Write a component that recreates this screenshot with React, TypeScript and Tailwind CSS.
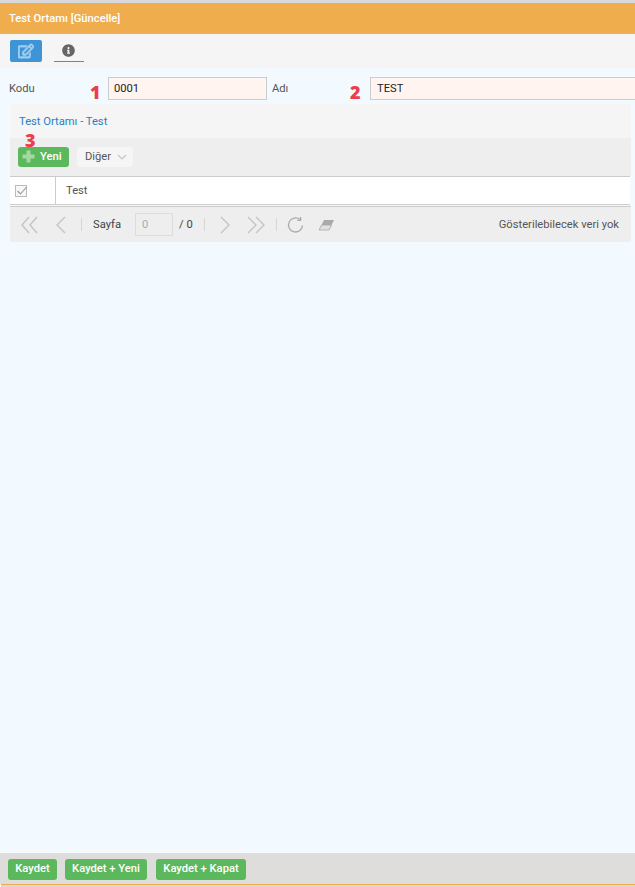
import { FaRegEdit, FaInfoCircle } from "react-icons/fa";

const font = { fontFamily: "Roboto, sans-serif" };

function Chev({ d, w = 18 }: { d: string; w?: number }) {
  return (
    <svg className="shrink-0" width={w} height="18" viewBox={`0 0 ${w} 18`} fill="none" stroke="#c4c4c4" strokeWidth="1.4">
      <path d={d} />
    </svg>
  );
}

function Sep() {
  return <span className="w-px h-[13px] bg-[#d5d5d5] shrink-0" />;
}

function GreenBtn({ children, w }: { children: string; w: string }) {
  return (
    <button className={`h-[21px] ${w} rounded-[3px] bg-[#5cb85c] text-white text-[11.2px] font-medium leading-none`}>
      {children}
    </button>
  );
}

function Mark({ children, className }: { children: string; className: string }) {
  return (
    <span
      className={`absolute text-[#ef3b4e] text-[18px] font-extrabold leading-none ${className}`}
      style={{ fontFamily: '"Open Sans", sans-serif' }}
    >
      {children}
    </span>
  );
}

export default function App() {
  return (
    <div className="w-[635px] h-[887px] flex flex-col overflow-hidden text-[11.2px] text-[#555]" style={font}>
      <div className="h-[3px] bg-[#d9d9d9]" />
      <div className="h-[31px] bg-[#f0ad4e] flex items-center pl-[9px] pt-[2px] text-white font-medium">
        Test Ortamı [Güncelle]
      </div>
      <div className="h-[34px] bg-[#f5f5f5] flex items-start pl-[10px] pt-[6px]">
        <div className="w-[32px] h-[22px] rounded-[2px] bg-[#3f94d6] flex items-center justify-center text-[#9fcff2]">
          <FaRegEdit size={16} stroke="currentColor" strokeWidth={30} />
        </div>
        <div className="ml-[12px] w-[30px] h-[22px] pr-[2px] border-b border-[#3f94d6] flex items-center justify-center text-[#666]">
          <FaInfoCircle size={13} />
        </div>
      </div>
      <div className="flex-1 bg-[#f2f9ff] flex flex-col">
        <div className="relative h-[36px] flex items-start pl-[9px] pt-[9px]">
          <span className="w-[99px] shrink-0 h-[23px] pt-[1px] flex items-center">Kodu</span>
          <div className="w-[159px] shrink-0 h-[23px] border border-[#ccc] bg-[#fff4ef] flex items-center pl-[5px] pt-[1px] text-[#222]">
            0001
          </div>
          <span className="w-[103px] shrink-0 pl-[5px] pt-[1px] h-[23px] flex items-center">Adı</span>
          <div className="w-[300px] shrink-0 h-[23px] border border-[#ccc] bg-[#fff4ef] flex items-center pl-[6px] pt-[1px] text-[#222]">
            TEST
          </div>
          <Mark className="left-[90px] top-[15px]">1</Mark>
          <Mark className="left-[350px] top-[15px]">2</Mark>
        </div>
        <div className="ml-[10px] w-[621px] flex flex-col">
          <div className="h-[34px] bg-[#f5f5f5] flex items-center pl-[9px] pt-[2px] text-[#2a7fc4]">Test Ortamı - Test</div>
          <div className="relative h-[38px] bg-[#eee] flex items-center pl-[8px] gap-[8px] pb-[1px]">
            <button className="h-[20px] w-[51px] rounded-[3px] bg-[#5cb85c] text-white font-medium flex items-center pl-[4px] pt-[1px] gap-[5px]">
              <svg className="shrink-0 -mt-px" width="13" height="13" viewBox="0 0 13 13" fill="#a3d8a3">
                <path d="M4.5 0.5h4v4h4v4h-4v4h-4v-4h-4v-4h4z" />
              </svg>
              <span>Yeni</span>
            </button>
            <div className="h-[20px] w-[56px] rounded-[3px] bg-[#f5f5f5] flex items-center pl-[8px] pt-[1px] gap-[6px] text-[#555]">
              <span>Diğer</span>
              <svg width="10" height="6" viewBox="0 0 10 6" fill="none" stroke="#c4c4c4" strokeWidth="1.2">
                <path d="M1 1l4 4 4-4" />
              </svg>
            </div>
            <Mark className="left-[15px] top-[-7px]">3</Mark>
          </div>
          <div className="h-[29px] bg-white border-y border-[#ccc] flex w-[620px]">
            <div className="w-[46px] border-r border-[#ccc] flex items-center pl-[5px]">
              <svg width="12" height="12" viewBox="0 0 12 12" fill="none">
                <rect x="0.5" y="0.5" width="11" height="11" stroke="#bbb" fill="#f7f7f7" />
                <path d="M2.5 6l3 3 6-7" stroke="#999" strokeWidth="1.1" />
              </svg>
            </div>
            <div className="flex items-center pl-[10px] pt-[1px]">Test</div>
          </div>
          <div className="h-[36px] bg-[#eee] border-t border-[#ccc] mt-[1px] flex items-center pl-[11px] pr-[12px] w-[621px]">
            <Chev d="M8 1L1 9l7 8M16 1L9 9l7 8" />
            <span className="w-[16px] shrink-0" />
            <Chev w={12} d="M10 1L2 9l8 8" />
            <span className="w-[14px] shrink-0" />
            <Sep />
            <span className="ml-[11px] pt-[1px] w-[28px] shrink-0 whitespace-nowrap text-[#444]">Sayfa</span>
            <div className="ml-[14px] w-[38px] shrink-0 h-[23px] border border-[#ddd] bg-[#eee] flex items-center pl-[6px] pt-[1px] text-[#aaa]">0</div>
            <span className="ml-[6px] pt-[1px] w-[13px] shrink-0 whitespace-nowrap text-[#444]">/ 0</span>
            <span className="w-[12px] shrink-0" />
            <Sep />
            <span className="w-[14px] shrink-0" />
            <Chev w={12} d="M2 1l8 8-8 8" />
            <span className="w-[16px] shrink-0" />
            <Chev d="M1 1l8 8-8 8M9 1l8 8-8 8" />
            <span className="w-[11px] shrink-0" />
            <Sep />
            <span className="w-[10px] shrink-0" />
            <svg className="shrink-0" width="18" height="18" viewBox="0 0 18 18" fill="none" stroke="#aaa" strokeWidth="1.3">
              <path d="M15.5 9.5A7 7 0 1 1 13 3.6" />
              <path d="M13.6 1v3.4H10.2" />
            </svg>
            <svg className="ml-[13px] shrink-0" width="17" height="12" viewBox="0 0 17 12">
              <path d="M6 1h10L11 11H1z" fill="#aaa" />
              <path d="M3.5 6H13.5L11 11H1z" fill="#e0e0e0" stroke="#aaa" strokeWidth="0.8" />
            </svg>
            <span className="ml-auto pt-[1px] whitespace-nowrap text-[#555]">Gösterilebilecek veri yok</span>
          </div>
        </div>
      </div>
      <div className="h-[31px] bg-[#dfdddb] flex items-center pl-[8px] pt-[1px] gap-[8px]">
        <GreenBtn w="w-[49px]">Kaydet</GreenBtn>
        <GreenBtn w="w-[82px]">Kaydet + Yeni</GreenBtn>
        <GreenBtn w="w-[90px] ml-px">Kaydet + Kapat</GreenBtn>
      </div>
      <div className="h-[3px] bg-[#d9d9d9] border-t border-[#f0ad4e] ml-px" />
    </div>
  );
}
